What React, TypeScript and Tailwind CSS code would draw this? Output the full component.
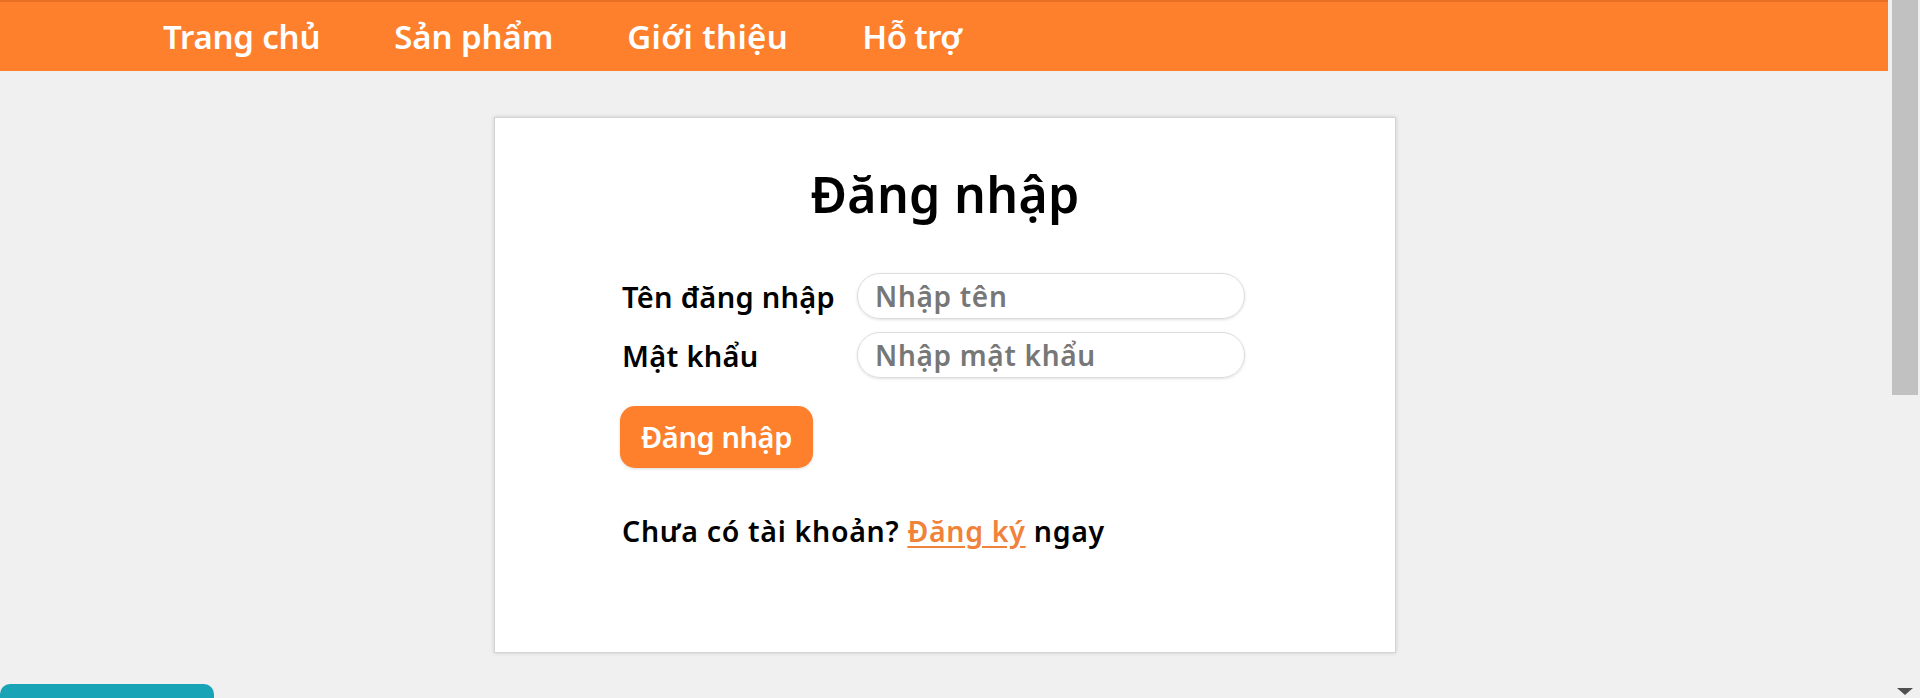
import React from "react";

const font = { fontFamily: '"Noto Sans", "Liberation Sans", sans-serif' };

export default function App() {
  return (
    <div className="h-[698px] w-[1920px] overflow-hidden bg-[#f0f0f0] flex" style={font}>
      <div className="w-[1888px] flex flex-col">
        <nav className="h-[71px] bg-[#fe7f2c] border-t-2 border-[#e86f25] flex items-center pl-[163px] gap-[74px] shrink-0">
          <a className="text-white text-[33px] font-semibold leading-none tracking-[-0.2px]">Trang chủ</a>
          <a className="text-white text-[33px] font-semibold leading-none tracking-[-0.1px]">Sản phẩm</a>
          <a className="text-white text-[33px] font-semibold leading-none tracking-[0.4px]">Giới thiệu</a>
          <a className="text-white text-[33px] font-semibold leading-none tracking-[-0.6px]">Hỗ trợ</a>
        </nav>
        <div className="flex flex-col shrink-0">
          <div className="mt-[46px] ml-[494px] w-[902px] bg-white border border-[#d4d4d4] shadow-[0_0_4px_rgba(0,0,0,0.15)] pt-[46px] pb-[101px]">
            <h1 className="text-center text-[50px] leading-[60px] font-semibold text-black tracking-[0.3px]">Đăng nhập</h1>
            <div className="ml-[127px] mt-[49px] grid grid-cols-[235px_388px] gap-y-[13px] items-center">
              <label className="text-[29px] font-semibold text-black leading-none tracking-[0.3px]">Tên đăng nhập</label>
              <input
                placeholder="Nhập tên"
                className="h-[46px] w-[388px] rounded-full border border-[#dcdcdc] shadow-[0_1px_3px_rgba(0,0,0,0.12)] px-[17px] text-[28px] font-semibold tracking-[0.7px] placeholder:text-[#777777] outline-none"
              />
              <label className="text-[29px] font-semibold text-black leading-none tracking-[0.3px]">Mật khẩu</label>
              <input
                placeholder="Nhập mật khẩu"
                className="h-[46px] w-[388px] rounded-full border border-[#dcdcdc] shadow-[0_1px_3px_rgba(0,0,0,0.12)] px-[17px] text-[28px] font-semibold tracking-[0.7px] placeholder:text-[#777777] outline-none"
              />
            </div>
            <div className="ml-[125px] mt-[28px]">
              <button className="h-[62px] w-[193px] rounded-[15px] bg-[#fe7f2c] text-white text-[29px] font-semibold tracking-[-0.4px] shadow-[0_1px_3px_rgba(0,0,0,0.15)]">
                Đăng nhập
              </button>
            </div>
            <p className="ml-[127px] mt-[43px] text-[28.5px] leading-[40px] font-semibold text-black tracking-[0.7px]">
              Chưa có tài khoản?{" "}
              <a className="text-[#f0823a] underline underline-offset-4">Đăng ký</a> ngay
            </p>
          </div>
          <div className="mt-[31px] w-[214px] h-[40px] bg-[#19a3b7] rounded-t-[10px]" />
        </div>
      </div>
      <div className="w-[32px] h-full relative bg-[#f0f0f0]">
        <div className="absolute left-[4px] top-0 w-[26px] h-[395px] bg-[#c1c1c1]" />
        <div className="absolute left-[9px] bottom-[3px] w-0 h-0 border-l-[8px] border-r-[8px] border-t-[7px] border-l-transparent border-r-transparent border-t-[#505050]" />
      </div>
    </div>
  );
}
